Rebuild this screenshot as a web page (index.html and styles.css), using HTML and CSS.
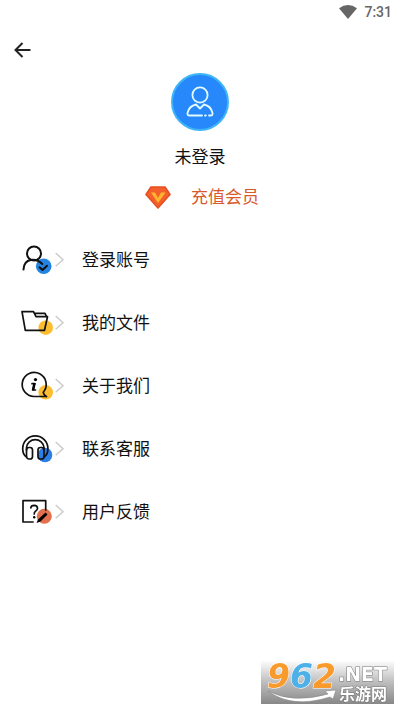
FILE: index.html
```html
<!DOCTYPE html>
<html lang="zh-CN">
<head>
<meta charset="utf-8">
<meta name="viewport" content="width=device-width, initial-scale=1">
<title>个人中心</title>
<link rel="stylesheet" href="styles.css">
</head>
<body>
<header class="status">
  <svg class="wifi" viewBox="0 0 18 14" aria-hidden="true"><path d="M0 3.2Q9-3 18 3.2L9 14Z"/></svg>
  <span>7:31</span>
</header>
<nav class="topbar">
  <button class="back" type="button" aria-label="返回">
    <svg viewBox="0 0 18 18" aria-hidden="true"><path d="M17.500 9H2.500M9.500 2L2.500 9l7 7"/></svg>
  </button>
</nav>
<main>
  <section class="profile">
    <svg class="avatar" viewBox="0 0 58 58" aria-hidden="true">
      <circle cx="29" cy="29" r="28" fill="#2788fb" stroke="#3fb4f6" stroke-width="2"/>
      <g fill="none" stroke="#e2fbff" stroke-width="1.8" stroke-linecap="round" stroke-linejoin="round">
        <circle cx="29" cy="22" r="7.600"/>
        <path d="M31 42.500H18.500Q16 42.500 16.500 40Q18 33 25 31.500L29 35.500L33 31.500Q40 33 41.500 40Q42 42.500 39.500 42.500H38M34 42.500h.8"/>
      </g>
    </svg>
    <h1 class="name">未登录</h1>
    <a class="vip" href="#vip">
      <svg viewBox="0 0 26 23" aria-hidden="true">
        <path d="M6 1H20L25 8.500L13 22L1 8.500Z" fill="#f4602b" stroke="#e64f20" stroke-width="1.600" stroke-linejoin="round"/>
        <path d="M6 6.500h4l3 5.500 3-5.500h4.500L13 17Z" fill="#ffb52e"/>
      </svg>
      <span>充值会员</span>
    </a>
  </section>
  <ul class="menu">
    <li><a href="#login">
      <svg viewBox="0 0 46 32" aria-hidden="true">
        <circle cx="23.700" cy="22.300" r="7.800" fill="#2583e2"/>
        <g class="line"><circle cx="14" cy="9.500" r="7"/><path d="M3.500 25.500C4 13.500 16 14 22.300 20M19.500 23.300l3 2.700 4.500-4.200"/></g>
        <path class="chevron" d="M35.700 9L43 15.700l-7.300 6.600"/>
      </svg><span>登录账号</span></a></li>
    <li><a href="#files">
      <svg viewBox="0 0 46 32" aria-hidden="true">
        <circle cx="25.700" cy="20.700" r="7.300" fill="#fdbd30"/>
        <g class="line thin"><path d="M2 4.700H13.500L16 9.700H27.500L24.500 23.300H5.300ZM14.500 6.300H25L26.500 9.500"/></g>
        <path class="chevron" d="M35.700 9L43 15.700l-7.300 6.600"/>
      </svg><span>我的文件</span></a></li>
    <li><a href="#about">
      <svg viewBox="0 0 46 32" aria-hidden="true">
        <circle cx="25.700" cy="22.300" r="7.300" fill="#fdbd30"/>
        <g class="line thin"><path d="M26.500 26.500H14A12 12 0 1 1 23.300 22.300Q23.500 25 26.500 26.500"/><path d="M12 13.700h2.500L13 20h2.500"/></g>
        <path d="M13.300 13h2.600l-1.700 7.500h-2.500Z"/>
        <circle cx="15.500" cy="9.600" r="1.600"/>
        <path class="chevron" d="M35.700 9L43 15.700l-7.300 6.600"/>
      </svg><span>关于我们</span></a></li>
    <li><a href="#service">
      <svg viewBox="0 0 46 32" aria-hidden="true">
        <circle cx="25" cy="22" r="7.300" fill="#2b7ee6"/>
        <g class="line thin"><path d="M6.500 24Q2.700 22 2.700 15.500A12.600 12.600 0 0 1 27.900 15.500Q27.900 22 24 24M6.500 17V14.500A8.800 8.800 0 0 1 24 14.500V17"/><rect x="6.500" y="14.500" width="6" height="11.500" rx="2.500"/><rect x="18" y="14.500" width="6" height="11.500" rx="2.500"/></g>
        <path class="chevron" d="M35.700 9L43 15.700l-7.300 6.600"/>
      </svg><span>联系客服</span></a></li>
    <li><a href="#feedback">
      <svg viewBox="0 0 46 32" aria-hidden="true">
        <circle cx="24.300" cy="20.300" r="7.500" fill="#e2704e"/>
        <g class="line thin"><path d="M13 26H3V4.700H25.700V14M10.800 12Q11 9.300 14.200 9.300Q17.500 9.500 17.500 12.200Q17.500 14 15.500 15.200Q14.200 16 14.200 18"/></g>
        <circle cx="14.200" cy="21.300" r="1.200"/>
        <path d="M16.500 27l1.500-3.500L25.500 16.500l2 2L20.500 25.500Z"/>
        <path class="chevron" d="M35.700 9L43 15.700l-7.300 6.600"/>
      </svg><span>用户反馈</span></a></li>
  </ul>
</main>
<svg class="watermark" viewBox="0 0 133 44" role="img" aria-label="962.NET 乐游网">
  <defs>
    <linearGradient id="shade" x2="0" y2="1"><stop offset="0" stop-color="#fff"/><stop offset=".5" stop-color="#bebebe"/><stop offset="1" stop-color="#888"/></linearGradient>
  </defs>
  <rect width="133" height="44" fill="url(#shade)"/>
  <path d="M7 31Q32 44 67 34L64 31L75 30L72 39L69 37Q31 49 7 31Z" fill="#fff" stroke="#888" stroke-width=".6"/>
  <g class="digits">
    <text x="6" y="28" fill="#f99a2c">9</text>
    <text x="29" y="28" fill="#4eb0e8">6</text>
    <text x="52" y="28" fill="#f99a2c">2</text>
  </g>
  <text class="domain" x="77" y="21">.NET</text>
  <text class="site" x="78" y="40">乐游网</text>
</svg>
</body>
</html>
```
FILE: styles.css
```css
* { box-sizing: border-box; }

body {
  margin: 0;
  min-height: 100vh;
  background: #fff;
  color: #111;
  font-family: Roboto, "Noto Sans CJK SC", sans-serif;
  font-size: 17px;
  line-height: 24px;
}

svg { display: block; flex: none; }
a { color: inherit; text-decoration: none; }

.status {
  display: flex;
  justify-content: flex-end;
  align-items: center;
  gap: 7px;
  height: 24px;
  padding-right: 8px;
  color: #666;
  font-size: 14px;
  font-weight: 500;
}

.wifi { width: 18px; height: 14px; fill: #666; }

.topbar {
  display: flex;
  align-items: center;
  height: 49px;
  padding: 2px 13px 0;
}

.back { padding: 0; border: 0; background: none; }

.back svg {
  width: 18px;
  height: 18px;
  fill: none;
  stroke: #222;
  stroke-width: 2;
}

.profile {
  display: flex;
  flex-direction: column;
  align-items: center;
}

.avatar { width: 58px; height: 58px; }

.name {
  margin: 14px 0 16px;
  font-size: 17px;
  font-weight: 400;
}

.vip {
  display: flex;
  align-items: center;
  gap: 20px;
  margin-right: -4px;
  color: #d95a2b;
}

.vip svg { width: 26px; height: 23px; }

.menu {
  display: flex;
  flex-direction: column;
  margin: 19px 0 0;
  padding: 0;
  list-style: none;
}

.menu a {
  display: flex;
  align-items: center;
  gap: 16px;
  height: 63px;
  padding: 0 20px;
}

.menu svg { width: 46px; height: 32px; }

.line {
  fill: none;
  stroke: #111;
  stroke-width: 2;
  stroke-linecap: round;
  stroke-linejoin: round;
}

.thin { stroke-width: 1.7; }

.chevron { fill: none; stroke: #ccc; stroke-width: 1.5; }

.watermark {
  position: fixed;
  right: 6px;
  bottom: 6px;
  width: 133px;
  height: 44px;
  overflow: visible;
}

.watermark text {
  stroke: #fff;
  stroke-width: 1;
  paint-order: stroke;
}

.digits { font: italic bold 33px "DejaVu Sans", sans-serif; }

.watermark .domain,
.watermark .site {
  fill: #fff;
  stroke: #777;
}

.domain { font: bold 19px "DejaVu Sans", sans-serif; }
.site { font: bold 16px "Noto Sans CJK SC", sans-serif; }
```
